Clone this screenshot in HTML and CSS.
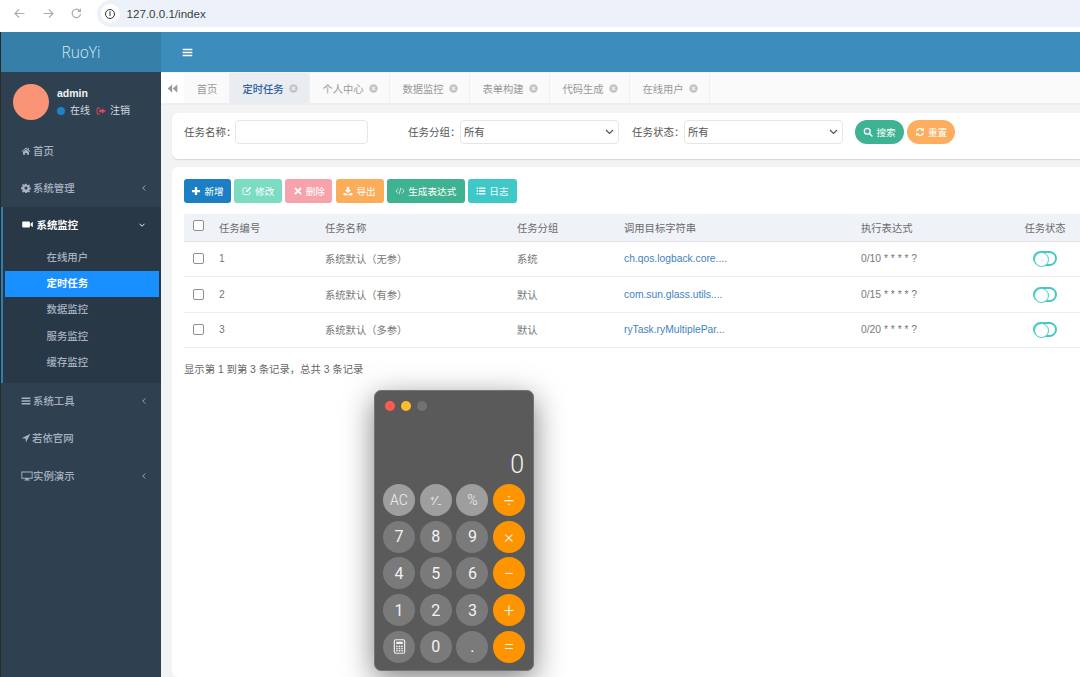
FILE: index.html
```html
<!DOCTYPE html>
<html lang="zh">
<head>
<meta charset="utf-8">
<title>RuoYi</title>
<link rel="stylesheet" href="styles.css">
</head>
<body>
<svg class="defs" width="0" height="0" aria-hidden="true">
  <symbol id="i-home" viewBox="0 0 16 16"><path d="M8 2.500 1 8.600l.8.9L8 4.200l6.200 5.300.8-.9-2.400-2.100V3h-1.800v1.900zM3.200 9.600V14h3.400v-3h2.800v3h3.400V9.600L8 5.500z" fill="currentColor"/></symbol>
  <symbol id="i-gear" viewBox="0 0 16 16"><path fill-rule="evenodd" d="M6.800 1h2.400l.4 2 1.300.6 1.800-1.100 1.700 1.700-1.100 1.800.6 1.300 2 .4v2.400l-2 .4-.6 1.300 1.100 1.800-1.700 1.700-1.800-1.100-1.300.6-.4 2H6.800l-.4-2-1.300-.6-1.800 1.100-1.700-1.700 1.100-1.800-.6-1.300-2-.4V6.700l2-.4.6-1.300-1.100-1.800 1.700-1.700 1.800 1.100 1.300-.6zM8 5.600a2.400 2.400 0 1 0 0 4.800 2.400 2.400 0 0 0 0-4.800z" fill="currentColor"/></symbol>
  <symbol id="i-video" viewBox="0 0 16 16"><path d="M1.800 3.500H10a1.500 1.500 0 0 1 1.500 1.500v6a1.500 1.500 0 0 1-1.500 1.500H1.800A1.500 1.500 0 0 1 .3 11V5a1.500 1.500 0 0 1 1.500-1.500zM12.300 6.800 15.700 4v8l-3.400-2.800z" fill="currentColor"/></symbol>
  <symbol id="i-bars" viewBox="0 0 16 16"><path d="M1 2.500h14v2.400H1zM1 6.800h14v2.400H1zM1 11.100h14v2.400H1z" fill="currentColor"/></symbol>
  <symbol id="i-arrow" viewBox="0 0 16 16"><path d="M15 1 1 8.500l6.300.4.6 6.100z" fill="currentColor"/></symbol>
  <symbol id="i-desktop" viewBox="0 0 16 16"><path fill-rule="evenodd" d="M.5 2h15v9.500H.5zM1.700 3.200v7.100h12.600V3.200zM6 11.500h4v1.500h1.500v1h-7v-1H6z" fill="currentColor"/></symbol>
  <symbol id="i-signout" viewBox="0 0 16 16"><path d="M6.500 2.500H3A2 2 0 0 0 1 4.500v7a2 2 0 0 0 2 2h3.500V12H3.200a.7.7 0 0 1-.7-.7V4.700a.7.7 0 0 1 .7-.7h3.300zM9.500 3.500 15.500 8l-6 4.500V10H5V6h4.500z" fill="currentColor"/></symbol>
  <symbol id="i-plus" viewBox="0 0 16 16"><path d="M6.200 1.500h3.600v4.700h4.700v3.600H9.800v4.700H6.200V9.800H1.500V6.200h4.700z" fill="currentColor"/></symbol>
  <symbol id="i-edit" viewBox="0 0 16 16"><path d="M12.500 9v3.200a1.600 1.600 0 0 1-1.600 1.600H3.100a1.600 1.600 0 0 1-1.600-1.600V4.800a1.600 1.600 0 0 1 1.600-1.600h5.400" fill="none" stroke="currentColor" stroke-width="1.300"/><path d="M13.300 1.200 15 2.900 8.500 9.500l-2.400.6.600-2.400z" fill="currentColor"/></symbol>
  <symbol id="i-times" viewBox="0 0 16 16"><path d="M4.300 2.200 8 5.900l3.700-3.700 2.100 2.100L10.100 8l3.700 3.700-2.100 2.100L8 10.100l-3.700 3.700-2.100-2.100L5.900 8 2.200 4.300z" fill="currentColor"/></symbol>
  <symbol id="i-download" viewBox="0 0 16 16"><path d="M6 1.500h4v5h3L8 11.300 3 6.500h3zM1 11h3.200L8 14l3.800-3H15v3.800H1z" fill="currentColor"/></symbol>
  <symbol id="i-code" viewBox="0 0 16 16"><path d="M5 4 1.500 8 5 12M11 4l3.500 4-3.500 4M9.300 3 6.700 13" fill="none" stroke="currentColor" stroke-width="1.100"/></symbol>
  <symbol id="i-list" viewBox="0 0 16 16"><path d="M1 2.500h2.500v2.200H1zM5 2.500h10v2.200H5zM1 6.900h2.500v2.200H1zM5 6.900h10v2.200H5zM1 11.300h2.500v2.200H1zM5 11.300h10v2.200H5z" fill="currentColor"/></symbol>
  <symbol id="i-search" viewBox="0 0 16 16"><circle cx="6.800" cy="6.800" r="4.700" fill="none" stroke="currentColor" stroke-width="2"/><path d="m10.300 10.300 4 4" stroke="currentColor" stroke-width="2.400" stroke-linecap="round"/></symbol>
  <symbol id="i-refresh" viewBox="0 0 16 16"><path d="M2.500 7A5.700 5.700 0 0 1 12.300 4.300M13.500 9A5.700 5.700 0 0 1 3.700 11.700" fill="none" stroke="currentColor" stroke-width="2.200"/><path d="M14.500 1.200v5h-5zM1.500 14.800v-5h5z" fill="currentColor"/></symbol>
  <symbol id="i-back" viewBox="0 0 16 16"><path d="M14 8H2.500M7.500 3 2.500 8l5 5" fill="none" stroke="currentColor" stroke-width="1.500"/></symbol>
  <symbol id="i-forward" viewBox="0 0 16 16"><path d="M2 8h11.500M8.500 3l5 5-5 5" fill="none" stroke="currentColor" stroke-width="1.500"/></symbol>
  <symbol id="i-reload" viewBox="0 0 16 16"><path d="M13 8.500A5.200 5.200 0 1 1 11.300 4" fill="none" stroke="currentColor" stroke-width="1.500"/><path d="M13.500 1.500v4.700H8.800z" fill="currentColor"/></symbol>
  <symbol id="i-left" viewBox="0 0 16 16"><path d="M10.500 3 5.500 8l5 5" fill="none" stroke="currentColor" stroke-width="1.800"/></symbol>
  <symbol id="i-down" viewBox="0 0 16 16"><path d="m3 5.500 5 5 5-5" fill="none" stroke="currentColor" stroke-width="1.800"/></symbol>
  <symbol id="i-rewind" viewBox="0 0 16 16"><path d="M7.500 2v12L1 8zM15 2v12L8.500 8z" fill="currentColor"/></symbol>
  <symbol id="i-close" viewBox="0 0 16 16"><circle cx="8" cy="8" r="7.500" fill="currentColor"/><path d="m5.200 5.200 5.600 5.600M10.800 5.200l-5.600 5.600" stroke="#f4f4f4" stroke-width="2"/></symbol>
  <symbol id="i-calc" viewBox="0 0 16 16"><rect x="2.500" y=".8" width="11" height="14.400" rx="1.600" fill="none" stroke="currentColor" stroke-width="1.200"/><path d="M4.500 3h7v2.400h-7zM4.500 7h1.600v1.400H4.500zM7.200 7h1.600v1.400H7.200zM9.900 7h1.600v1.400H9.900zM4.500 9.400h1.600v1.400H4.500zM7.200 9.400h1.600v1.400H7.200zM9.900 9.400h1.600v1.400H9.900zM4.500 11.800h1.600v1.400H4.500zM7.200 11.800h1.600v1.400H7.200zM9.900 11.800h1.600v1.400H9.900z" fill="currentColor"/></symbol>
</svg>

<header class="chrome">
  <svg class="chrome-ico"><use href="#i-back"/></svg>
  <svg class="chrome-ico"><use href="#i-forward"/></svg>
  <svg class="chrome-ico"><use href="#i-reload"/></svg>
  <div class="url">
    <span class="url-info"><span class="info-ring">i</span></span>
    <span class="url-text">127.0.0.1/index</span>
  </div>
</header>

<div class="app">
  <aside class="sidebar">
    <div class="logo">RuoYi</div>
    <div class="user">
      <div class="avatar"></div>
      <div class="user-info">
        <div class="user-name">admin</div>
        <div class="user-status">
          <span class="dot"></span><span>在线</span>
          <svg class="signout"><use href="#i-signout"/></svg><span>注销</span>
        </div>
      </div>
    </div>
    <nav class="nav">
      <a class="nav-item"><svg class="nav-ico"><use href="#i-home"/></svg><span>首页</span></a>
      <a class="nav-item"><svg class="nav-ico"><use href="#i-gear"/></svg><span>系统管理</span><svg class="caret"><use href="#i-left"/></svg></a>
      <div class="nav-open">
        <a class="nav-item nav-head"><svg class="nav-ico"><use href="#i-video"/></svg><span>系统监控</span><svg class="caret"><use href="#i-down"/></svg></a>
        <a class="sub-item">在线用户</a>
        <a class="sub-item sub-active">定时任务</a>
        <a class="sub-item">数据监控</a>
        <a class="sub-item">服务监控</a>
        <a class="sub-item">缓存监控</a>
      </div>
      <a class="nav-item"><svg class="nav-ico"><use href="#i-bars"/></svg><span>系统工具</span><svg class="caret"><use href="#i-left"/></svg></a>
      <a class="nav-item"><svg class="nav-ico nav-ico-tight"><use href="#i-arrow"/></svg><span>若依官网</span></a>
      <a class="nav-item nav-last"><svg class="nav-ico nav-ico-wide"><use href="#i-desktop"/></svg><span>实例演示</span><svg class="caret"><use href="#i-left"/></svg></a>
    </nav>
  </aside>

  <main class="main">
    <div class="topbar"><svg class="burger"><use href="#i-bars"/></svg></div>
    <div class="tabs">
      <div class="tab-back"><svg class="rewind"><use href="#i-rewind"/></svg></div>
      <div class="tab tab-home">首页</div>
      <div class="tab tab-active">定时任务<svg class="tab-x"><use href="#i-close"/></svg></div>
      <div class="tab">个人中心<svg class="tab-x"><use href="#i-close"/></svg></div>
      <div class="tab">数据监控<svg class="tab-x"><use href="#i-close"/></svg></div>
      <div class="tab">表单构建<svg class="tab-x"><use href="#i-close"/></svg></div>
      <div class="tab">代码生成<svg class="tab-x"><use href="#i-close"/></svg></div>
      <div class="tab">在线用户<svg class="tab-x"><use href="#i-close"/></svg></div>
    </div>
    <div class="content">
      <form class="panel search">
        <label class="lbl">任务名称：</label>
        <input class="field field-name" type="text">
        <label class="lbl lbl-group">任务分组：</label>
        <select class="field field-select"><option>所有</option></select>
        <label class="lbl lbl-status">任务状态：</label>
        <select class="field field-select"><option>所有</option></select>
        <span class="pill pill-search"><svg class="btn-ico"><use href="#i-search"/></svg>搜索</span>
        <span class="pill pill-reset"><svg class="btn-ico"><use href="#i-refresh"/></svg>重置</span>
      </form>
      <section class="panel list">
        <div class="toolbar">
          <span class="btn btn-add"><svg class="btn-ico"><use href="#i-plus"/></svg>新增</span>
          <span class="btn btn-edit"><svg class="btn-ico"><use href="#i-edit"/></svg>修改</span>
          <span class="btn btn-del"><svg class="btn-ico"><use href="#i-times"/></svg>删除</span>
          <span class="btn btn-exp"><svg class="btn-ico"><use href="#i-download"/></svg>导出</span>
          <span class="btn btn-gen"><svg class="btn-ico"><use href="#i-code"/></svg>生成表达式</span>
          <span class="btn btn-log"><svg class="btn-ico"><use href="#i-list"/></svg>日志</span>
        </div>
        <table class="grid">
          <thead>
            <tr><th class="c-chk"><span class="chk chk-head"></span></th><th class="c-id">任务编号</th><th class="c-name">任务名称</th><th class="c-group">任务分组</th><th class="c-target">调用目标字符串</th><th class="c-cron">执行表达式</th><th class="c-state">任务状态</th></tr>
          </thead>
          <tbody>
            <tr><td><span class="chk"></span></td><td>1</td><td>系统默认（无参）</td><td>系统</td><td class="link">ch.qos.logback.core....</td><td>0/10 * * * * ?</td><td class="c-state"><span class="toggle"></span></td></tr>
            <tr><td><span class="chk"></span></td><td>2</td><td>系统默认（有参）</td><td>默认</td><td class="link">com.sun.glass.utils....</td><td>0/15 * * * * ?</td><td class="c-state"><span class="toggle"></span></td></tr>
            <tr><td><span class="chk"></span></td><td>3</td><td>系统默认（多参）</td><td>默认</td><td class="link">ryTask.ryMultiplePar...</td><td>0/20 * * * * ?</td><td class="c-state"><span class="toggle"></span></td></tr>
          </tbody>
        </table>
        <p class="summary">显示第 1 到第 3 条记录，总共 3 条记录</p>
      </section>
    </div>
  </main>
</div>

<div class="calc">
  <div class="lights"><span class="light l-red"></span><span class="light l-yellow"></span><span class="light l-grey"></span></div>
  <div class="display">0</div>
  <div class="keys">
    <span class="key k-fn">AC</span><span class="key k-fn k-small">⁺∕₋</span><span class="key k-fn">%</span><span class="key k-op">÷</span>
    <span class="key">7</span><span class="key">8</span><span class="key">9</span><span class="key k-op">×</span>
    <span class="key">4</span><span class="key">5</span><span class="key">6</span><span class="key k-op">−</span>
    <span class="key">1</span><span class="key">2</span><span class="key">3</span><span class="key k-op">+</span>
    <span class="key"><svg class="calc-ico"><use href="#i-calc"/></svg></span><span class="key">0</span><span class="key">.</span><span class="key k-op">=</span>
  </div>
</div>
</body>
</html>
```

FILE: styles.css
```css
* { box-sizing: border-box; }
html, body { margin: 0; height: 100%; }
body {
  position: relative;
  width: 1080px;
  height: 677px;
  overflow: hidden;
  background: #fff;
  font-family: "Liberation Sans", "Noto Sans CJK SC", sans-serif;
  font-size: 10.5px;
  color: #676a6c;
}
.defs { position: absolute; }

/* browser chrome */
.chrome {
  height: 32px;
  display: flex;
  align-items: flex-start;
  padding: 6.5px 0 0 13px;
  background: #fff;
  color: #a9acb0;
}
.chrome-ico { width: 13px; height: 13px; margin-right: 15.5px; flex: none; }
.url {
  flex: 1;
  height: 27px;
  margin: -6.5px 0 0 -2px;
  display: flex;
  align-items: center;
  padding-left: 4px;
  border-radius: 14px 0 0 14px;
  background: #edf2fa;
}
.url-info {
  width: 19px; height: 19px;
  border-radius: 50%;
  background: #fff;
  display: flex; align-items: center; justify-content: center;
}
.info-ring {
  width: 10px; height: 10px;
  border: 1.2px solid #333;
  border-radius: 50%;
  font-size: 7px;
  line-height: 8px;
  font-weight: 700;
  text-align: center;
  color: #333;
}
.url-text { margin-left: 7px; font-size: 11.6px; color: #3a3d42; }

.app { display: flex; height: 645px; }

/* sidebar */
.sidebar {
  width: 161px;
  flex: none;
  background: #2f4050;
  border-left: 1px solid #2a2a2a;
  color: #a7b1c2;
}
.logo {
  height: 40px;
  background: #367fa9;
  color: #d9e8f2;
  font-size: 15.5px;
  line-height: 40px;
  text-align: center;
  font-family: "Open Sans", "Liberation Sans", sans-serif;
  font-weight: 300;
}
.user { height: 61px; display: flex; padding: 12px 0 0 12px; }
.avatar { width: 36px; height: 36px; border-radius: 50%; background: #fa9477; flex: none; }
.user-info { margin-left: 8px; padding-top: 3px; }
.user-name { color: #f2f4f6; font-weight: 700; font-size: 10.5px; line-height: 13px; }
.user-status { display: flex; align-items: center; margin-top: 4px; color: #d5dae0; font-size: 10px; line-height: 14px; }
.dot { width: 8px; height: 8px; border-radius: 50%; background: #1c84c6; margin-right: 5px; }
.signout { width: 10px; height: 10px; margin: 0 4px 0 6px; color: #e0435f; }

.nav-item {
  height: 37px;
  display: flex;
  align-items: center;
  padding: 0 0 2px 20px;
  font-size: 10.4px;
  font-weight: 500;
}
.nav-ico { width: 10px; height: 10px; margin-right: 2px; flex: none; }
.nav-ico-tight { margin-right: 1px; }
.nav-ico-wide { width: 12px; height: 12px; margin-right: 0; }
.nav-last { padding-bottom: 0; }
.caret { width: 8px; height: 8px; margin-left: auto; margin-right: 13px; flex: none; }
.nav-open {
  height: 176px;
  background: #293846;
  border-left: 2.5px solid #2d80ad;
  padding-right: 2px;
}
.nav-head { height: 38px; padding: 0 0 3px 19px; color: #fff; font-weight: 700; }
.nav-head .nav-ico { width: 11px; height: 11px; margin-right: 3.5px; }
.sub-item {
  display: block;
  height: 26.2px;
  line-height: 26px;
  margin-left: 1.5px;
  padding-left: 42px;
  font-size: 10.4px;
  font-weight: 500;
}
.sub-active { background: #1890ff; color: #fff; font-weight: 700; }

/* main column */
.main { flex: 1; min-width: 0; background: #f3f3f4; display: flex; flex-direction: column; }
.topbar { height: 40px; background: #3c8dbc; display: flex; align-items: center; padding: 1px 0 0 21px; flex: none; }
.burger { width: 11px; height: 11px; color: #fff; }
.tabs {
  height: 32px;
  margin-top: 1px;
  flex: none;
  display: flex;
  background: #fafafa;
  border-bottom: 2px solid #eeeeee;
  font-size: 10.3px;
  color: #999;
}
.tab-back { width: 23px; background: #fff; display: flex; align-items: center; justify-content: center; color: #9a9a9a; }
.rewind { width: 11px; height: 11px; }
.tab {
  width: 80px;
  display: flex;
  align-items: center;
  justify-content: center;
  gap: 5px;
  padding-left: 1px;
  border-right: 1px solid #f0f0f0;
}
.tab-home { width: 46px; }
.tab-active { background: #e9edf2; color: #2f5f9c; font-weight: 500; }
.tab-x { width: 9px; height: 9px; color: #c4c4c4; }
.content { flex: 1; min-height: 0; padding: 8px 0 0 11px; display: flex; flex-direction: column; gap: 8px; }
.panel { background: #fff; border-radius: 6px 0 0 6px; }

/* search */
.search {
  height: 46px;
  flex: none;
  display: flex;
  align-items: flex-start;
  padding: 7px 0 0 12px;
  box-shadow: 0 1px 1px rgba(0, 0, 0, .12);
}
.lbl { line-height: 24px; width: 51px; flex: none; color: #555; font-size: 10.5px; white-space: nowrap; }
.lbl-group { width: 52px; margin-left: 40px; }
.lbl-status { width: 52px; margin-left: 13px; }
.field {
  height: 24px;
  border: 1px solid #e6e6e6;
  border-radius: 4px;
  background: #fff;
  font: inherit;
  font-size: 10.3px;
  color: #555;
  outline: none;
}
.field-name { width: 133px; }
.field-select {
  width: 159px;
  padding: 0 0 0 3px;
  appearance: none;
  -webkit-appearance: none;
  background-image: url("data:image/svg+xml,%3Csvg xmlns='http://www.w3.org/2000/svg' width='9' height='6'%3E%3Cpath d='m1 1 3.5 3.500L8 1' fill='none' stroke='%23555' stroke-width='1.200'/%3E%3C/svg%3E");
  background-repeat: no-repeat;
  background-position: right 4px center;
}
.pill {
  height: 24px;
  display: inline-flex;
  align-items: center;
  justify-content: center;
  border-radius: 12px;
  color: #fff;
  font-size: 9.6px;
  flex: none;
}
.pill-search { width: 49px; margin-left: 12px; background: #3eb393; }
.pill-reset { width: 48px; margin-left: 3px; background: #fcae5e; }
.btn-ico { width: 10px; height: 10px; margin-right: 3px; flex: none; }

/* list panel */
.list { flex: 1; padding: 12px 0 0 12px; min-height: 0; }
.toolbar { display: flex; gap: 3.2px; }
.btn {
  height: 24px;
  display: inline-flex;
  align-items: center;
  justify-content: center;
  border-radius: 3px;
  color: #fff;
  font-size: 9.6px;
  flex: none;
}
.btn-add { width: 47px; background: #1c7fc4; }
.btn-edit { width: 48px; background: #7bdcc2; }
.btn-del { width: 47px; background: #f7a3ac; }
.btn-exp { width: 48px; background: #fcad59; }
.btn-gen { width: 78px; background: #3fb391; }
.btn-log { width: 49px; background: #3ec8c8; }
.grid {
  margin-top: 11px;
  width: 896px;
  table-layout: fixed;
  border-collapse: collapse;
  font-size: 10.3px;
}
.grid th {
  height: 27px;
  background: #eff2f7;
  border-bottom: 1px solid #dfe3e8;
  text-align: left;
  font-weight: 400;
  color: #6b6b6b;
  padding: 0;
}
.grid td { height: 35.5px; border-bottom: 1px solid #eceef1; padding: 0; color: #777; }
.c-chk { width: 35px; }
.c-id { width: 106px; }
.c-name { width: 192px; }
.c-group { width: 107px; }
.c-target { width: 237px; }
.c-cron { width: 150px; }
.grid .c-state { text-align: center; padding-right: 1px; }
.grid .link { color: #3f82bf; }
.chk {
  display: block;
  width: 11px; height: 11px;
  margin-left: 9px;
  border: 1px solid #8f8f8f;
  border-radius: 2px;
  background: #fff;
}
.chk-head { margin-top: -3px; }
.toggle {
  display: block;
  position: relative;
  width: 24px; height: 15px;
  margin: 0 auto;
  border: 2px solid #44c9c6;
  border-radius: 8px;
  background: #fff;
}
.toggle::before {
  content: "";
  position: absolute;
  left: -1px; top: -1px;
  width: 13px; height: 13px;
  border: 1px solid #44c9c6;
  border-radius: 50%;
  background: #fff;
}
.summary { margin: 15px 0 0; font-size: 10.35px; line-height: 14px; color: #666; }

/* calculator window on the desktop */
.calc {
  position: absolute;
  left: 374px; top: 390px;
  width: 160px; height: 281px;
  padding: 10px 8px 0;
  background: #5a5a5a;
  border: 1px solid #747474;
  border-radius: 7px;
  box-shadow: 0 8px 30px rgba(0, 0, 0, .5);
  color: #f2f2f2;
  font-family: "Roboto", "Liberation Sans", sans-serif;
}
.lights { display: flex; gap: 6px; height: 10px; margin-left: 2px; }
.light { width: 10px; height: 10px; border-radius: 50%; }
.l-red { background: #fb5b51; }
.l-yellow { background: #fdbb2e; }
.l-grey { background: #727272; }
.display {
  height: 33px;
  margin-top: 38px;
  padding-right: 1px;
  text-align: right;
  font-weight: 300;
  font-size: 25px;
  line-height: 32px;
}
.keys {
  margin-top: 2px;
  display: grid;
  grid-template-columns: repeat(4, 32px);
  grid-auto-rows: 32px;
  gap: 4.7px;
}
.key {
  border-radius: 50%;
  background: #7a7a7a;
  display: flex; align-items: center; justify-content: center;
  font-size: 16px;
  color: #f2f2f2;
}
.k-fn { background: #9e9e9e; font-size: 14px; font-weight: 300; }
.k-small { font-size: 13px; }
.k-op { background: #fe9500; font-size: 19px; font-weight: 300; }
.calc-ico { width: 15px; height: 15px; }
```
